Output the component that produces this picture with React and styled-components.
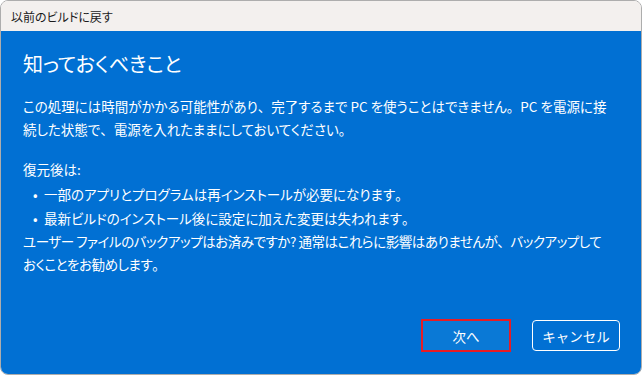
import React from "react";
import styled, { createGlobalStyle } from "styled-components";

const GlobalStyle = createGlobalStyle`
  html, body {
    margin: 0;
    padding: 0;
    background: #ffffff;
  }
  body {
    font-family: "Noto Sans CJK JP", "Noto Sans", sans-serif;
    font-feature-settings: "palt";
  }
`;

const Window = styled.div`
  width: 642px;
  height: 375px;
  box-sizing: border-box;
  border: 1px solid #adadad;
  border-radius: 8px;
  overflow: hidden;
  display: flex;
  flex-direction: column;
`;

const TitleBar = styled.div`
  height: 30px;
  flex-shrink: 0;
  display: flex;
  align-items: center;
  padding-left: 10px;
  background: #f3f0ee;
  color: #1a1a1a;
  font-size: 12px;
`;

const Body = styled.div`
  flex: 1;
  background: #0170d3;
  color: #ffffff;
  padding: 17px 21px 22px 22px;
  display: flex;
  flex-direction: column;
`;

const Heading = styled.h1`
  margin: 0 0 15px;
  font-size: 20px;
  font-weight: 400;
  line-height: 32px;
`;

const Text = styled.p`
  margin: 0 0 ${(p) => p.$gap || 0}px;
  max-width: ${(p) => p.$max || 600}px;
  font-size: 13.5px;
  line-height: 23px;
  letter-spacing: ${(p) => p.$spacing || 0}px;
`;

// full-width punctuation as in the original dialog
const Punct = styled.span`
  font-feature-settings: normal;
`;

const List = styled.ul`
  margin: 1px 0 0;
  padding: 0 0 0 10px;
  list-style: none;
`;

const Item = styled.li`
  font-size: 13.5px;
  line-height: 24px;
  &::before {
    content: "•";
    display: inline-block;
    width: 11px;
  }
`;

const Footer = styled.div`
  margin-top: auto;
  display: flex;
  justify-content: flex-end;
  gap: 21px;
`;

const Button = styled.button`
  box-sizing: border-box;
  height: ${(p) => (p.$primary ? 33 : 31)}px;
  width: ${(p) => (p.$primary ? 90 : 88)}px;
  margin-top: ${(p) => (p.$primary ? 0 : 1)}px;
  border-radius: ${(p) => (p.$primary ? 0 : 4)}px;
  border: ${(p) => (p.$primary ? "2px solid #e81c24" : "1.5px solid #ffffff")};
  background: ${(p) => (p.$primary ? "#0a79d6" : "transparent")};
  color: #ffffff;
  font-family: "Noto Sans CJK JP", "Noto Sans", sans-serif;
  font-size: 13.5px;
  padding: 0;
`;

export default function App() {
  return (
    <>
      <GlobalStyle />
      <Window>
        <TitleBar>以前のビルドに戻す</TitleBar>
        <Body>
          <Heading>知っておくべきこと</Heading>
          <Text $gap={17} $max={585}>
            この処理には時間がかかる可能性があり<Punct>、</Punct>完了するまで PC を使うことはできません<Punct>。</Punct>PC を電源に接続した状態で<Punct>、</Punct>電源を入れたままにしておいてください<Punct>。</Punct>
          </Text>
          <Text>復元後は:</Text>
          <List>
            <Item>一部のアプリとプログラムは再インストールが必要になります<Punct>。</Punct></Item>
            <Item>最新ビルドのインストール後に設定に加えた変更は失われます<Punct>。</Punct></Item>
          </List>
          <Text $spacing={-0.45} $max={580}>
            ユーザー ファイルのバックアップはお済みですか? 通常はこれらに影響はありませんが<Punct>、</Punct>バックアップしておくことをお勧めします<Punct>。</Punct>
          </Text>
          <Footer>
            <Button $primary>次へ</Button>
            <Button>キャンセル</Button>
          </Footer>
        </Body>
      </Window>
    </>
  );
}
